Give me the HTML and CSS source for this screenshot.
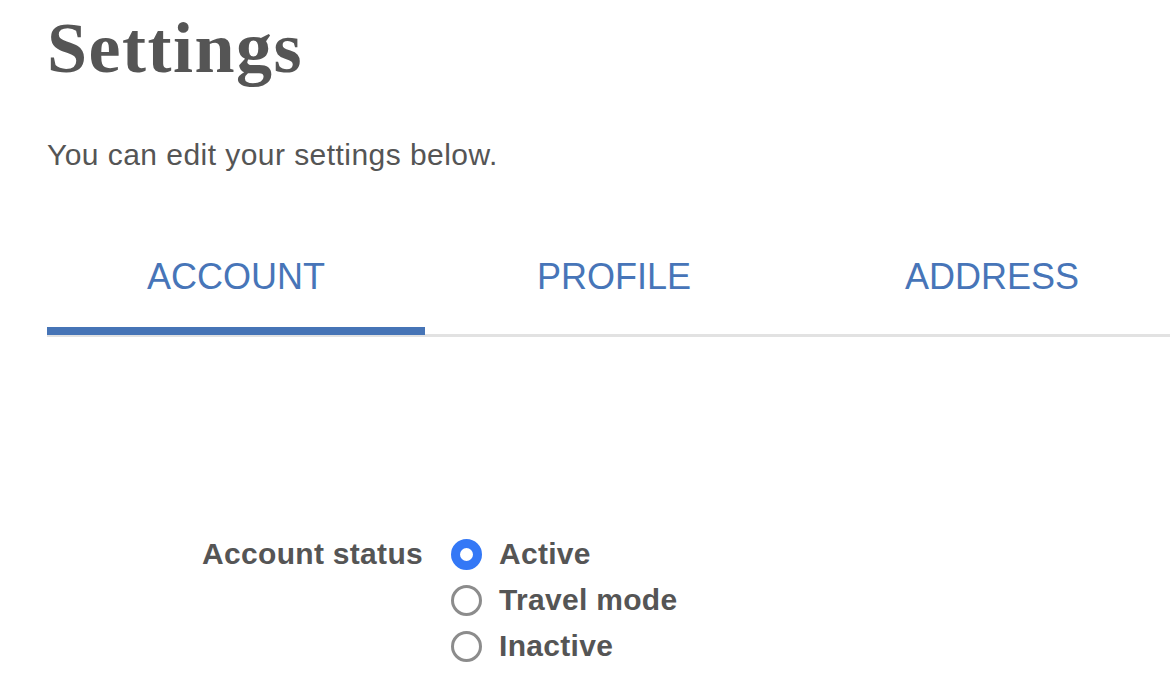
FILE: index.html
```html
<!DOCTYPE html>
<html lang="en">
<head>
<meta charset="utf-8">
<title>Settings</title>
<link rel="stylesheet" href="styles.css">
</head>
<body>
<main class="page">
  <h1 class="title">Settings</h1>
  <p class="intro">You can edit your settings below.</p>
  <nav class="tabs">
    <a class="tab tab-active" href="#">ACCOUNT</a>
    <a class="tab" href="#">PROFILE</a>
    <a class="tab" href="#">ADDRESS</a>
  </nav>
  <form class="form">
    <div class="field">
      <span class="field-label">Account status</span>
      <div class="options">
        <label class="option"><input type="radio" name="status" class="radio" checked><span>Active</span></label>
        <label class="option"><input type="radio" name="status" class="radio"><span>Travel mode</span></label>
        <label class="option"><input type="radio" name="status" class="radio"><span>Inactive</span></label>
      </div>
    </div>
  </form>
</main>
</body>
</html>
```

FILE: styles.css
```css
html, body {
  margin: 0;
  padding: 0;
  background: #ffffff;
  overflow: hidden;
}

.page {
  padding-left: 47px;
  width: 1134px;
  color: #555555;
  font-family: "Liberation Sans", Arial, sans-serif;
}

.title {
  margin: 12px 0 0 0;
  font-family: "Liberation Serif", "Times New Roman", serif;
  font-weight: bold;
  font-size: 72px;
  line-height: 72px;
  letter-spacing: 1.5px;
  color: #555555;
}

.intro {
  margin: 53px 0 0 0;
  font-size: 30px;
  line-height: 36px;
  letter-spacing: 0.45px;
  color: #555555;
}

.tabs {
  margin-top: 82px;
  display: grid;
  grid-template-columns: repeat(3, 378px);
  border-bottom: 3px solid #e2e2e2;
}

.tab {
  display: block;
  text-align: center;
  font-size: 36px;
  line-height: 44px;
  padding-bottom: 28px;
  border-bottom: 8px solid transparent;
  margin-bottom: -1px;
  color: #4775b8;
  text-decoration: none;
}

.tab-active {
  border-bottom-color: #4674b6;
}

.form {
  margin-top: 194px;
}

.field {
  display: flex;
  align-items: flex-start;
}

.field-label {
  width: 376px;
  text-align: right;
  font-size: 30px;
  font-weight: bold;
  letter-spacing: 0.3px;
  line-height: 46px;
  margin-right: 28px;
  color: #555555;
}

.options {
  display: flex;
  flex-direction: column;
}

.option {
  display: flex;
  align-items: center;
  height: 46px;
  font-size: 30px;
  font-weight: bold;
  letter-spacing: 0.3px;
  color: #555555;
}

.radio {
  appearance: none;
  -webkit-appearance: none;
  margin: 0 17px 0 0;
  width: 31px;
  height: 31px;
  box-sizing: border-box;
  border-radius: 50%;
  border: 3.5px solid #8c8c8c;
  background: #ffffff;
}

.radio:checked {
  border: 9px solid #3478f6;
  background: #ffffff;
}
```
